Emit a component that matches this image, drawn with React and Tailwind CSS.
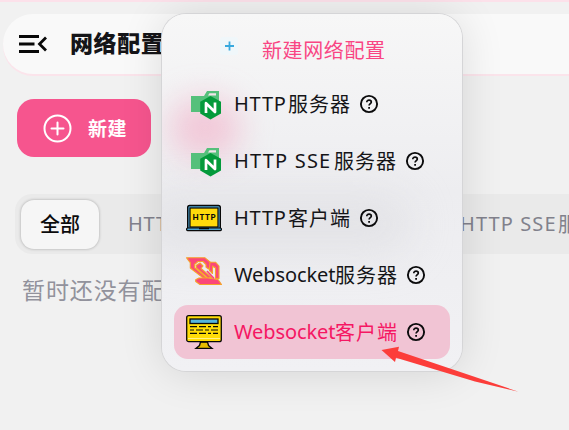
import React from "react";

const Help = () => (
  <svg width="20" height="20" viewBox="0 0 20 20" fill="none" stroke="#0b0b0c" strokeWidth="1.9" className="shrink-0">
    <circle cx="10" cy="10" r="8.1" />
    <path d="M7.8 8.2C7.8 5.4 12.3 5.6 12.3 8.1C12.3 9.7 10.1 9.7 10.1 11.6" strokeWidth="1.7" />
    <path d="M9.2 13.8H11" strokeWidth="1.8" />
  </svg>
);

const Nginx = () => (
  <svg width="36" height="36" viewBox="0 0 36 36">
    <path d="M5 10H18L21 5H33V26H5Z" fill="#55c07b" />
    <path d="M22 9.5L23.5 7.3H30V9.5Z" fill="#f3e4ea" />
    <path d="M24.5 10L35 15.8V27.5L24.5 33.5L14.2 27.5V15.8Z" fill="#049a3b" />
    <path d="M20 27V17.2L29 26V16.4" fill="none" stroke="#fff" strokeWidth="2.7" strokeLinejoin="round" />
  </svg>
);

const Laptop = () => (
  <svg width="36" height="36" viewBox="0 0 36 36">
    <rect x="1.7" y="5.5" width="32.6" height="24" rx="2" fill="#4ea6d4" stroke="#080808" strokeWidth="1.4" />
    <rect x="4" y="8" width="28" height="19" fill="#ffda0b" stroke="#080808" strokeWidth="1.2" />
    <rect x="0.6" y="28" width="34.8" height="2.6" rx="1" fill="#4ea6d4" stroke="#080808" strokeWidth="1.2" />
    <path d="M13 28.5H23" stroke="#080808" strokeWidth="1.5" />
    <text x="6.5" y="20.4" textLength="23" fontSize="8" fontWeight="900" fontFamily="Lato, sans-serif" fill="#080808">HTTP</text>
  </svg>
);

const Sockets = () => (
  <svg width="36" height="36" viewBox="0 0 36 36" fill="#fb4779" stroke="#f6a12c" strokeWidth="1.1" strokeLinejoin="round">
    <path d="M0.600 0.800H19L27 7.500L22.500 12L20 10V7.500L17 4.500H12L8.500 7.500V10.500L21 21.500H18L4.300 11V5.700Z" />
    <path d="M10 8.500L14 6L17 9L15 11.500L25.500 20.500L22 21L10.500 11Z" />
    <path d="M24 5.200H29.500L33 9V21.500H29.500V11L26.500 9V16.500L23.500 13.500V10Z" />
    <path d="M9.700 22.800L13 21H22L32 22.500L35.500 27.500H14L9.700 24.500Z" />
    <path d="M21 14L28 21.500" fill="none" stroke="#fb4779" strokeWidth="1.8" />
  </svg>
);

const Monitor = () => (
  <svg width="36" height="36" viewBox="0 0 36 36" stroke="#080808" strokeWidth="1.3">
    <path d="M14.500 28H21.500L22.500 31.500L26 34.300H10L13.500 31.500Z" fill="#e8bd00" />
    <rect x="0.7" y="1.7" width="34.6" height="26" rx="2" fill="#ffdc08" />
    <path d="M2 24.500H34" stroke="#fff18a" strokeWidth="1" />
    <rect x="4" y="5" width="28" height="4.5" fill="#55b5dc" />
    <path d="M4 12.700H11M13 12.700H20M22 12.700H25M27 12.700H32M4 16H8M10 16H17M19 16H23M25 16H32M4 19.300H11M13 19.300H20M22 19.300H25M27 19.300H32" strokeWidth="1.2" />
  </svg>
);

const items = [
  { icon: Nginx, latin: "HTTP", cjk: "服务器", latinClass: "w-[54px] tracking-[0.8px]" },
  { icon: Nginx, latin: "HTTP SSE", cjk: "服务器", latinClass: "w-[100px] tracking-[1.2px]" },
  { icon: Laptop, latin: "HTTP", cjk: "客户端", latinClass: "w-[54px] tracking-[0.8px]" },
  { icon: Sockets, latin: "Websocket", cjk: "服务器", latinClass: "w-[101px] tracking-[-0.1px]" },
  { icon: Monitor, latin: "Websocket", cjk: "客户端", latinClass: "w-[101px] tracking-[-0.1px]", active: true },
];

function MenuItem({ icon: Icon, latin, cjk, latinClass, active }) {
  return (
    <div className={`flex h-[54px] items-center rounded-[14px] pl-3 ${active ? "bg-[#f1c4d4] text-[#f51763]" : "text-[#151518]"}`}>
      <Icon />
      <span className={`ml-3 shrink-0 whitespace-nowrap font-['Noto_Sans'] text-[20px] leading-7 ${latinClass}`}>{latin}</span>
      <span className="mr-[8px] whitespace-nowrap text-[20px] leading-7 tracking-[1px]">{cjk}</span>
      <Help />
    </div>
  );
}

export default function App() {
  return (
    <div className="relative h-[430px] w-[569px] overflow-hidden bg-[#f1f1f1] font-['Noto_Sans_CJK_SC',sans-serif]">
      <div className="h-[2px] bg-[#fce1ea]" />
      <header className="mt-3 ml-[3px] flex h-[60px] items-center rounded-l-[30px] bg-[#f9f9f9] pl-4 shadow-[0_2px_0_#fbe4eb]">
        <svg width="28" height="20" viewBox="0 0 28 20" fill="none" stroke="#080808" strokeWidth="2.8">
          <path d="M0 2.500H20M0 10H15.500M0 17.500H20M27 3.500L20.500 10L27 16.500" />
        </svg>
        <h1 className="-mt-1 ml-[23px] whitespace-nowrap text-[23px] leading-8 font-black tracking-[0.6px] text-[#151518]">网络配置</h1>
      </header>

      <button className="mt-[25px] ml-[17px] flex h-[58px] w-[134px] items-center rounded-[17px] bg-[#f6558e] pl-[26px] text-white">
        <svg width="29" height="29" viewBox="0 0 29 29" fill="none" stroke="white" strokeWidth="2">
          <circle cx="14.5" cy="14.5" r="13" />
          <path d="M14.500 8.500V20.500M8.500 14.500H20.500" strokeLinecap="round" />
        </svg>
        <span className="ml-4 text-[19px] leading-7 font-bold tracking-[0.6px]">新建</span>
      </button>

      <nav className="mt-[37px] ml-[15px] flex h-[60px] items-center rounded-l-[17px] bg-[#eaeaea] pl-[6px] text-[20px] text-[#81818c]">
        <div className="flex h-[49px] w-[78px] shrink-0 items-center justify-center rounded-[13px] bg-[#f6f6f6] font-medium text-[#0b0b0c] shadow-[0_0_3px_rgba(0,0,0,0.3)]">全部</div>
        <span className="ml-[29px] w-[332px] shrink-0 font-['Noto_Sans'] tracking-[0.8px]">HTTP</span>
        <span className="w-[98px] shrink-0 whitespace-nowrap font-['Noto_Sans'] tracking-[1.1px]">HTTP SSE</span>
        <span className="whitespace-nowrap">服务器</span>
      </nav>
      <p className="mt-[17px] ml-[22px] whitespace-nowrap text-[23px] leading-9 tracking-[0.9px] text-[#92929c]">暂时还没有配置</p>

      <div className="absolute top-[14px] left-[162px] h-[357px] w-[300px] overflow-hidden rounded-[24px] bg-linear-to-b from-[#f7f7f7] via-[#ededf0] to-[#f1f1f4] shadow-[0_0_0_1px_#d5d5d7,0_2px_44px_rgba(0,0,0,0.12)]">
        <div className="absolute top-[84px] left-[8px] h-[60px] w-[70px] rounded-full bg-[#f397b7]/45 blur-[16px]" />
        <div className="absolute top-[180px] left-[-20px] h-[60px] w-[270px] rounded-full bg-[#d8d8dc]/45 blur-[20px]" />
        <div className="relative flex h-full flex-col px-3 pt-[5px]">
          <div className="flex h-[58px] items-start">
            <svg className="mt-[18px] ml-[46px]" width="18" height="18" viewBox="0 0 18 18">
              <rect width="18" height="18" rx="3" fill="#f0f7fa" />
              <path d="M9.500 4.500V13.500M5 9H14" stroke="#38a9de" strokeWidth="1.8" />
            </svg>
            <span className="mt-[17px] ml-[24px] whitespace-nowrap text-[20px] leading-7 tracking-[0.6px] text-[#f94583]">新建网络配置</span>
          </div>
          <div className="flex flex-col gap-[3px]">
            {items.map((item) => <MenuItem key={item.latin + item.cjk} {...item} />)}
          </div>
        </div>
      </div>

      <svg className="absolute top-[340px] left-[375px]" width="150" height="56" viewBox="0 0 150 56">
        <path d="M6.500 10L24 6.700L23 11L143.500 51.700L100 41.500L21 17.700L20 22Z" fill="#fc3d3a" />
      </svg>
    </div>
  );
}
